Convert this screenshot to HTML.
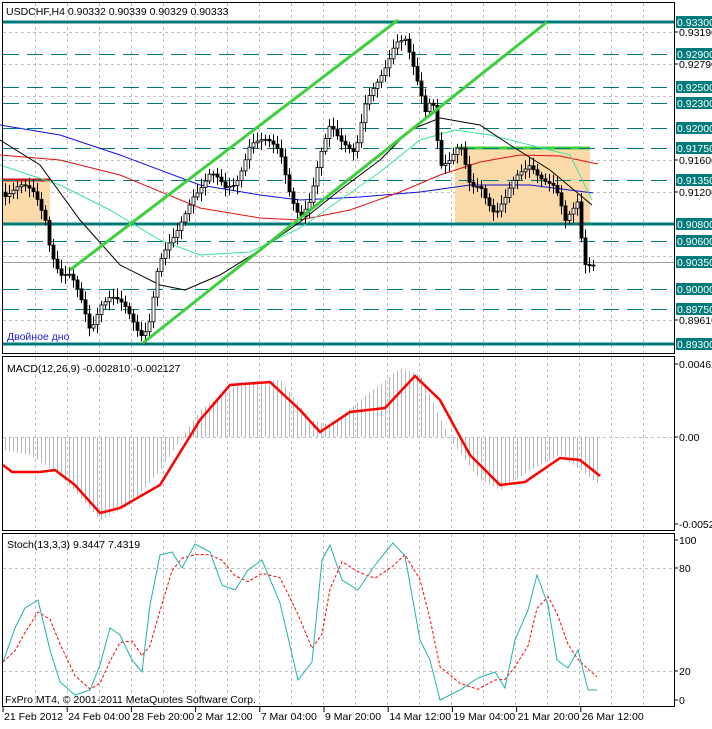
<!DOCTYPE html>
<html><head><meta charset="utf-8">
<style>
html,body{margin:0;padding:0;background:#fff;}
body{width:712px;height:724px;overflow:hidden;font-family:"Liberation Sans",sans-serif;}
svg text{font-family:"Liberation Sans",sans-serif;font-size:10.5px;}
</style></head><body>
<svg id="s" width="712" height="724" xmlns="http://www.w3.org/2000/svg">
<rect width="712" height="724" fill="#fff"/>
<g id="grid"></g>
<rect x="2" y="180" width="48" height="44" fill="#fcd9a8"/>
<line x1="2" y1="180" x2="50" y2="180" stroke="#e01010" stroke-width="3"/>
<rect x="455" y="148" width="135" height="76" fill="#fcd9a8"/>
<line x1="455" y1="148" x2="590" y2="148" stroke="#3ecf3e" stroke-width="3"/>
<g id="levels"></g>
<g id="mas" fill="none" stroke-width="1"></g>
<g id="candles"></g>
<line x1="70" y1="270" x2="398" y2="20" stroke="#3ecf3e" stroke-width="3"/>
<line x1="143" y1="343" x2="547" y2="22" stroke="#3ecf3e" stroke-width="3"/>
<g id="macd"></g>
<g id="stoch" fill="none"></g>
<rect x="2.5" y="2.5" width="672" height="351" fill="none" stroke="#000"/>
<rect x="2.5" y="356.5" width="672" height="174" fill="none" stroke="#000"/>
<rect x="2.5" y="533.5" width="672" height="173" fill="none" stroke="#000"/>
<text x="6" y="15" fill="#000">USDCHF,H4  0.90332 0.90339 0.90329 0.90333</text>
<text x="7" y="340" fill="#2020e0">Двойное дно</text>
<text x="7" y="372" fill="#000">MACD(12,26,9) -0.002810 -0.002127</text>
<text x="7" y="548" fill="#000">Stoch(13,3,3) 9.3447 7.4319</text>
<text x="5" y="703" fill="#000">FxPro MT4, © 2001-2011 MetaQuotes Software Corp.</text>
<g id="axis"></g>
</svg>
<script>
(function(){
var NS="http://www.w3.org/2000/svg";
function el(p,t,a,txt){var e=document.createElementNS(NS,t);for(var k in a)e.setAttribute(k,a[k]);if(txt!=null)e.textContent=txt;document.getElementById(p).appendChild(e);return e;}
function pts(a){return a.map(function(p){return p[0]+","+p[1]}).join(" ");}
function interp(a,x){for(var i=0;i<a.length-1;i++){if(x>=a[i][0]&&x<=a[i+1][0]){var t=(x-a[i][0])/(a[i+1][0]-a[i][0]);return a[i][1]+t*(a[i+1][1]-a[i][1]);}}return x<a[0][0]?a[0][1]:a[a.length-1][1];}
for(var x=35;x<674;x+=32){
 [[3,353],[357,530],[534,706]].forEach(function(r){el("grid","line",{x1:x+.5,y1:r[0],x2:x+.5,y2:r[1],stroke:"#c0c0c0","stroke-dasharray":"3,3"});});
}
[32,64,96,160,192,256,320].forEach(function(y){el("grid","line",{x1:3,y1:y+.5,x2:674,y2:y+.5,stroke:"#c0c0c0","stroke-dasharray":"3,3"});});
el("grid","line",{x1:3,y1:437.5,x2:674,y2:437.5,stroke:"#c0c0c0","stroke-dasharray":"3,3"});
el("grid","line",{x1:3,y1:568.5,x2:674,y2:568.5,stroke:"#c0c0c0","stroke-dasharray":"3,3"});
el("grid","line",{x1:3,y1:671.5,x2:674,y2:671.5,stroke:"#c0c0c0","stroke-dasharray":"3,3"});
var teal="#007b7b";
var lv=[[22,"0.93300",1],[54,"0.92900",0],[87,"0.92500",0],[103,"0.92300",0],[128,"0.92000",0],[148,"0.91750",0],[180,"0.91350",0],[224,"0.90800",1],[241,"0.90600",0],[289,"0.90000",0],[309,"0.89750",0],[344,"0.89300",1]];
lv.forEach(function(l){
 if(l[2])el("levels","line",{x1:3,y1:l[0],x2:674,y2:l[0],stroke:teal,"stroke-width":3});
 else el("levels","line",{x1:3,y1:l[0]+.5,x2:674,y2:l[0]+.5,stroke:teal,"stroke-dasharray":"16,8"});
});
el("levels","line",{x1:3,y1:262.5,x2:674,y2:262.5,stroke:"#a0a0a0"});
var blue=[[0,125],[60,135],[120,155],[200,185],[260,195],[300,200],[360,197],[420,192],[470,185],[530,185],[593,193]];
var red=[[0,155],[60,160],[120,175],[200,208],[260,218],[300,220],[350,210],[400,192],[440,175],[480,162],[520,155],[560,156],[598,164]];
var blk=[[0,140],[40,165],[80,220],[120,265],[160,285],[185,290],[220,275],[260,250],[300,222],[340,190],[380,160],[410,130],[440,118],[480,125],[510,145],[550,170],[592,205]];
var aqua=[[0,165],[60,185],[110,210],[160,240],[200,255],[250,252],[300,228],[340,200],[380,172],[420,140],[455,130],[490,135],[530,145],[570,155],[592,200]];
el("mas","polyline",{points:pts(blue),stroke:"#1010e0"});
el("mas","polyline",{points:pts(red),stroke:"#e01010"});
el("mas","polyline",{points:pts(aqua),stroke:"#3ee39a"});
el("mas","polyline",{points:pts(blk),stroke:"#000"});
var path=[[3,192],[20,190],[35,195],[45,215],[50,245],[60,275],[70,280],[80,300],[90,328],[100,300],[110,297],[125,312],[140,332],[148,322],[158,265],[175,240],[192,192],[210,175],[225,192],[235,182],[250,140],[265,145],[280,152],[290,190],[300,215],[310,205],[320,160],[330,122],[345,140],[355,155],[365,110],[380,75],[395,38],[405,42],[415,80],[425,112],[432,92],[440,160],[450,160],[460,150],[470,190],[480,182],[495,212],[505,202],[515,182],[530,160],[545,180],[555,192],[565,225],[577,198],[584,258],[592,263]];
var prev=interp(path,3);
for(var x=5;x<=595;x+=4){
 var c=interp(path,x)+Math.sin(x*1.7)*6,o=prev;var hi=Math.min(o,c)-3-Math.abs(Math.sin(x*0.9))*6,lo=Math.max(o,c)+3+Math.abs(Math.cos(x*1.3))*6;
 el("candles","line",{x1:x+.5,y1:hi,x2:x+.5,y2:lo,stroke:"#000"});
 var ty=Math.min(o,c),h=Math.max(1,Math.abs(o-c));
 el("candles","rect",{x:x-1,y:ty,width:3,height:h,fill:c<o?"#fff":"#000",stroke:"#000","stroke-width":.8});
 prev=c;
}
var hist=[[3,450],[30,455],[60,475],[100,520],[130,505],[160,470],[200,410],[240,382],[280,380],[310,420],[330,425],[360,400],[400,368],[420,375],[450,440],[480,480],[500,490],[530,470],[560,455],[600,485]];
for(var x=5;x<=600;x+=4){var y=interp(hist,x);el("macd","line",{x1:x+.5,y1:437,x2:x+.5,y2:y,stroke:"#b8b8b8"});}
var sig=[[3,465],[12,472],[40,472],[55,470],[75,485],[100,513],[120,508],[160,485],[200,420],[230,385],[270,382],[300,410],[320,432],[350,412],[385,408],[415,376],[440,400],[470,455],[500,485],[525,482],[560,458],[580,460],[600,476]];
el("macd","polyline",{points:pts(sig),fill:"none",stroke:"#f00","stroke-width":2.5});
var st=[[3,662],[15,628],[25,608],[38,600],[50,650],[60,682],[75,695],[90,690],[100,665],[110,628],[120,635],[132,660],[142,672],[150,605],[160,555],[172,552],[182,568],[195,544],[210,552],[222,585],[235,590],[248,570],[262,560],[280,603],[298,680],[312,662],[322,560],[330,545],[342,580],[358,590],[375,565],[393,543],[405,556],[420,640],[430,660],[440,700],[460,690],[478,678],[495,672],[505,688],[515,640],[528,610],[537,575],[548,605],[557,660],[568,668],[578,650],[588,690],[597,690]];
var sd=st.map(function(p,i){var a=st[Math.max(0,i-1)][1],b=st[Math.max(0,i-2)][1];return [p[0],(p[1]+a+b)/3];});
el("stoch","polyline",{points:pts(sd),stroke:"#f00","stroke-dasharray":"3,2"});
el("stoch","polyline",{points:pts(st),stroke:"#20b2aa"});
lv.forEach(function(l){el("axis","rect",{x:676,y:l[0]-6,width:36,height:12,fill:teal});el("axis","text",{x:677,y:l[0]+4,fill:"#fff"},l[1]);});
el("axis","rect",{x:676,y:256,width:36,height:12,fill:teal});el("axis","text",{x:677,y:266,fill:"#fff"},"0.90350");
[[32,"0.93190"],[64,"0.92790"],[160,"0.91600"],[192,"0.91200"],[320,"0.89610"]].forEach(function(l){el("axis","line",{x1:674,y1:l[0],x2:678,y2:l[0],stroke:"#000"});el("axis","text",{x:679,y:l[0]+4,fill:"#000"},l[1]);});
[[364,"0.00462"],[437,"0.00"],[524,"-0.00528"],[540,"100"],[568,"80"],[671,"20"],[700,"0"]].forEach(function(l){el("axis","line",{x1:674,y1:l[0],x2:678,y2:l[0],stroke:"#000"});el("axis","text",{x:679,y:l[0]+4,fill:"#000"},l[1]);});
var tl=["21 Feb 2012","24 Feb 04:00","28 Feb 20:00","2 Mar 12:00","7 Mar 04:00","9 Mar 20:00","14 Mar 12:00","19 Mar 04:00","21 Mar 20:00","26 Mar 12:00"];
tl.forEach(function(t,i){var x=3+i*64.2;el("axis","line",{x1:x,y1:707,x2:x,y2:712,stroke:"#000"});el("axis","text",{x:x+1,y:720,fill:"#000"},t);});
})();
</script>
</body></html>
